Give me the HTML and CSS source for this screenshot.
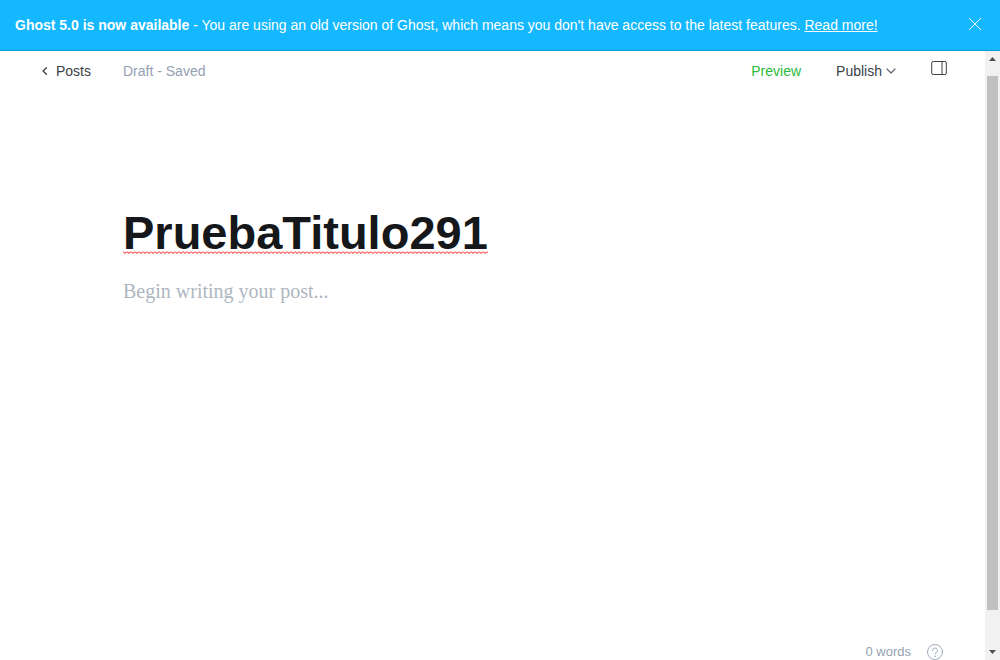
FILE: index.html
```html
<!DOCTYPE html>
<html lang="en">
<head>
<meta charset="utf-8">
<meta name="viewport" content="width=device-width, initial-scale=1">
<title>Ghost Editor</title>
<link rel="stylesheet" href="styles.css">
</head>
<body>
<div class="app">
  <aside class="alert">
    <p class="alert-text"><b>Ghost 5.0 is now available</b> - You are using an old version of Ghost, which means you don't have access to the latest features. <a href="#">Read more!</a></p>
    <button class="alert-close" type="button" aria-label="Close">
      <svg width="14" height="14" viewBox="0 0 14 14" fill="none" stroke="currentColor" stroke-width=".9"><path d="M1 1l12 12M13 1L1 13"/></svg>
    </button>
  </aside>
  <div class="viewport">
    <div class="editor">
      <header class="toolbar">
        <a class="back" href="#">
          <svg width="6" height="10" viewBox="0 0 6 10" fill="none" stroke="currentColor" stroke-width="1.3" stroke-linecap="round" stroke-linejoin="round"><path d="M4.500 1.700L1 5l3.500 3.300"/></svg>
          Posts
        </a>
        <span class="status">Draft - Saved</span>
        <div class="actions">
          <button class="preview" type="button">Preview</button>
          <button class="publish" type="button">Publish
            <svg width="10" height="6" viewBox="0 0 10 6" fill="none" stroke="currentColor" stroke-width="1.2" stroke-linecap="round" stroke-linejoin="round"><path d="M1 1l4 4 4-4"/></svg>
          </button>
          <button class="settings" type="button" aria-label="Settings">
            <svg width="16" height="14" viewBox="0 0 16 14" fill="none" stroke="currentColor"><rect x=".7" y=".5" width="14.600" height="13" rx="1.500"/><path d="M11 .5v13"/></svg>
          </button>
        </div>
      </header>
      <main class="post">
        <input class="title" type="text" aria-label="Post title" value="PruebaTitulo291" spellcheck="false">
        <textarea class="content" aria-label="Post content" placeholder="Begin writing your post..."></textarea>
      </main>
      <footer class="footer">
        <span>0 words</span>
        <a class="help" href="#" aria-label="Help">
          <svg width="16" height="16" viewBox="0 0 16 16" fill="none" stroke="currentColor" stroke-width=".9" stroke-linecap="round"><circle cx="8" cy="8" r="7.500"/><path d="M5.500 6.500a2.500 2.500 0 1 1 3.500 2.300C8.200 9.200 8 9.500 8 10.200"/><circle cx="8" cy="12.200" r=".4" fill="currentColor" stroke-width=".5"/></svg>
        </a>
      </footer>
    </div>
    <div class="scrollbar" aria-hidden="true">
      <svg width="7" height="4" viewBox="0 0 7 4" fill="currentColor"><path d="M0 4L3.500 0 7 4z"/></svg>
      <div class="track"><div class="thumb"></div></div>
      <svg width="7" height="4" viewBox="0 0 7 4" fill="currentColor"><path d="M0 0L3.500 4 7 0z"/></svg>
    </div>
  </div>
</div>
</body>
</html>
```
FILE: styles.css
```css
* { box-sizing: border-box; }
body {
  margin: 0;
  background: #fff;
  color: #394047;
  font: 14px/20px "Liberation Sans", Arial, sans-serif;
}
button {
  border: 0;
  padding: 0;
  background: none;
  color: inherit;
  font: inherit;
  cursor: pointer;
}
svg { display: block; }
.app { display: flex; flex-direction: column; height: 100vh; }
.alert {
  display: flex;
  align-items: center;
  justify-content: space-between;
  padding: 15px 18px 15px 15px;
  border-bottom: 1px solid #0099dc;
  background: #14b8ff;
  color: #fff;
}
.alert-text { margin: 0; }
.alert a { color: inherit; }
.alert-close { padding-bottom: 2px; }
.viewport { display: flex; flex: 1; min-height: 0; }
.editor { display: flex; flex: 1; flex-direction: column; min-width: 0; }
.toolbar { display: flex; align-items: center; padding: 10px 38px 0 42px; }
.back {
  display: flex;
  align-items: center;
  gap: 8px;
  width: 81px;
  color: inherit;
  text-decoration: none;
}
.status { color: #95a1b2; }
.actions { display: flex; align-items: center; margin-left: auto; }
.preview { margin-right: 35px; color: #2bba3c; }
.publish { display: flex; align-items: center; gap: 4px; margin-right: 35px; }
.publish svg { color: #5d666f; }
.settings { padding-bottom: 6px; }
.post {
  display: flex;
  flex: 1;
  flex-direction: column;
  align-items: flex-start;
  padding: 125px 123px 0;
}
.title {
  field-sizing: content;
  max-width: 100%;
  height: 54px;
  padding: 0;
  border: 0;
  outline: 0;
  background: url("data:image/svg+xml,%3Csvg xmlns='http://www.w3.org/2000/svg' width='4' height='3'%3E%3Cpath d='M0 .5L2 2.500 4 .5' fill='none' stroke='%23f00' stroke-width='1'/%3E%3C/svg%3E") left 0 top 45px repeat-x;
  color: #15171a;
  font: bold 47px/54px "Liberation Sans", Arial, sans-serif;
}
.content {
  width: 100%;
  flex: 1;
  margin-top: 15px;
  padding: 0;
  border: 0;
  outline: 0;
  resize: none;
  background: none;
  font: 20px/32px "Liberation Serif", Georgia, serif;
}
.content::placeholder { color: #aeb7c1; }
.footer {
  display: flex;
  align-items: center;
  justify-content: flex-end;
  gap: 16px;
  height: 16px;
  padding-right: 42px;
  color: #95a1b2;
  font-size: 13px;
}
.help { color: inherit; }
.scrollbar {
  display: flex;
  flex-direction: column;
  align-items: center;
  gap: 15px;
  width: 15px;
  padding: 6px 0;
  background: #f1f1f1;
  color: #505050;
}
.track { display: flex; flex: 1; width: 11px; padding-bottom: 25px; }
.thumb { flex: 1; background: #c1c1c1; }
```
